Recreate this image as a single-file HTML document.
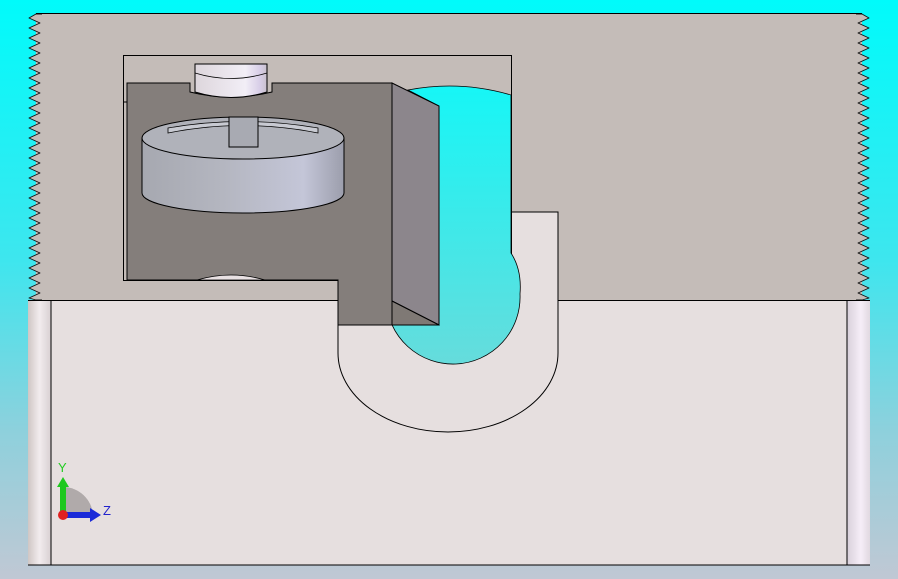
<!DOCTYPE html>
<html><head><style>
html,body{margin:0;padding:0;width:898px;height:579px;overflow:hidden}
body{background:linear-gradient(#00fbfb 0%,#3ee6ee 45%,#8fd0dc 75%,#c0c8d4 100%)}
</style></head><body>
<svg width="898" height="579" viewBox="0 0 898 579" xmlns="http://www.w3.org/2000/svg" style="position:absolute;left:0;top:0">
<defs>
<linearGradient id="rod" x1="0" x2="1" y1="0" y2="0"><stop offset="0" stop-color="#cfc6c4"/><stop offset="0.5" stop-color="#f2ecee"/><stop offset="1" stop-color="#d8d0d2"/></linearGradient>
<linearGradient id="rodR" x1="0" x2="1" y1="0" y2="0"><stop offset="0" stop-color="#d8d0da"/><stop offset="0.6" stop-color="#f6eef8"/><stop offset="1" stop-color="#e0d8e0"/></linearGradient>
<linearGradient id="cyan" x1="0" x2="0" y1="0" y2="1"><stop offset="0" stop-color="#16f6f6"/><stop offset="1" stop-color="#66dcdc"/></linearGradient>
<linearGradient id="boss" x1="0" x2="1" y1="0" y2="0"><stop offset="0" stop-color="#ddd6dc"/><stop offset="0.7" stop-color="#f2eef6"/><stop offset="0.9" stop-color="#d8cee8"/><stop offset="1" stop-color="#c8c0cc"/></linearGradient>
<linearGradient id="cyl" x1="0" x2="1" y1="0" y2="0"><stop offset="0" stop-color="#a6a8b0"/><stop offset="0.4" stop-color="#b4b6c0"/><stop offset="0.8" stop-color="#c4c6d8"/><stop offset="1" stop-color="#9c9eac"/></linearGradient>
</defs>
<rect x="28" y="300" width="842" height="265" fill="#e6dfdf"/>
<rect x="28" y="300" width="23" height="265" fill="url(#rod)"/>
<rect x="847" y="300" width="23" height="265" fill="url(#rodR)"/>
<line x1="51" y1="300" x2="51" y2="565" stroke="#000" stroke-width="1"/>
<line x1="847" y1="300" x2="847" y2="565" stroke="#000" stroke-width="1"/>
<line x1="28" y1="565" x2="870" y2="565" stroke="#000" stroke-width="1"/>
<rect x="36" y="13" width="826" height="287" fill="#c4bcb8"/>
<g fill="#c4bcb8" stroke="#111" stroke-width="0.9" stroke-linejoin="round">
<path d="M44 14 L36 14 L29 18 L40 23 L29 28 L40 33 L29 38 L40 43 L29 48 L40 53 L29 58 L40 63 L29 68 L40 73 L29 78 L40 83 L29 88 L40 93 L29 98 L40 103 L29 108 L40 113 L29 118 L40 123 L29 128 L40 133 L29 138 L40 143 L29 148 L40 153 L29 158 L40 163 L29 168 L40 173 L29 178 L40 183 L29 188 L40 193 L29 198 L40 203 L29 208 L40 213 L29 218 L40 223 L29 228 L40 233 L29 238 L40 243 L29 248 L40 253 L29 258 L40 263 L29 268 L40 273 L29 278 L40 283 L29 288 L40 293 L29 298 L36 300 L44 300 Z"/>
<path d="M854 14 L862 14 L869 18 L858 23 L869 28 L858 33 L869 38 L858 43 L869 48 L858 53 L869 58 L858 63 L869 68 L858 73 L869 78 L858 83 L869 88 L858 93 L869 98 L858 103 L869 108 L858 113 L869 118 L858 123 L869 128 L858 133 L869 138 L858 143 L869 148 L858 153 L869 158 L858 163 L869 168 L858 173 L869 178 L858 183 L869 188 L858 193 L869 198 L858 203 L869 208 L858 213 L869 218 L858 223 L869 228 L858 233 L869 238 L858 243 L869 248 L858 253 L869 258 L858 263 L869 268 L858 273 L869 278 L858 283 L869 288 L858 293 L869 298 L862 300 L854 300 Z"/>
</g>
<rect x="42" y="14" width="814" height="286" fill="#c4bcb8"/>
<line x1="36" y1="13.5" x2="862" y2="13.5" stroke="#000" stroke-width="1"/>
<line x1="28" y1="300.5" x2="338" y2="300.5" stroke="#000" stroke-width="1"/>
<line x1="558" y1="300.5" x2="870" y2="300.5" stroke="#000" stroke-width="1"/>
<path d="M511 212 L558 212 L558 353 A110 79 0 0 1 338 353 L338 300 L511 300 Z" fill="#e6dfdf"/>
<path d="M511 212 L558 212 L558 353 A110 79 0 0 1 338 353 L338 300" fill="none" stroke="#000" stroke-width="1"/>
<rect x="123.5" y="55.5" width="388" height="225" fill="#c4bcb8" stroke="#000" stroke-width="1"/>
<line x1="511.5" y1="212" x2="511.5" y2="300" stroke="#000"/>
<path d="M408 90 Q460 80 511 95 L511 253 Q522 270 520 294 A67 67 0 0 1 386 300 L439 300 L439 106 Z" fill="url(#cyan)" stroke="#000" stroke-width="0.8"/>
<path d="M127 83 L190 83 L190 92 Q230 102 272 92 L272 83 L392 83 L392 301 L392 325 L338 325 L338 280 L127 280 Z" fill="#847e7b" stroke="#000" stroke-width="1"/>
<path d="M392 83 L439 106 L439 325 L392 301 Z" fill="#8c868c" stroke="#000" stroke-width="1"/>
<path d="M392 301 L439 325 L392 325 Z" fill="#7f7975" stroke="#000" stroke-width="1"/>
<line x1="123" y1="102" x2="127" y2="102" stroke="#000"/>
<path d="M195 64 L267 64 L267 92 Q231 103 195 92 Z" fill="url(#boss)" stroke="#000" stroke-width="1"/>
<path d="M195 73 Q231 84 267 73" fill="none" stroke="#000" stroke-width="0.8"/>
<path d="M197 280 Q231 270 265 280 Z" fill="#e8e0e2" stroke="#000" stroke-width="0.8"/>
<path d="M142 138 L142 193 A101 20 0 0 0 344 193 L344 138 Z" fill="url(#cyl)" stroke="#000" stroke-width="1"/>
<ellipse cx="243" cy="138" rx="101" ry="21" fill="#b0b2ba" stroke="#000" stroke-width="1"/>
<path d="M168 133 Q243 118 318 133 L318 128 Q243 115 168 128 Z" fill="#c8cad2" stroke="#000" stroke-width="0.8"/>
<rect x="229" y="117" width="29" height="30" fill="#a8aab2" stroke="#000" stroke-width="1"/>
<path d="M63 487 A30 30 0 0 1 93 515 L63 515 Z" fill="#b0aaaa"/>
<rect x="60" y="486" width="6" height="29" fill="#1ec81e"/>
<path d="M57 487 L63 477 L69 487 Z" fill="#1ec81e"/>
<rect x="63" y="512" width="28" height="6" fill="#1a2ad8"/>
<path d="M90 508 L101 515 L90 522 Z" fill="#1a2ad8"/>
<circle cx="63" cy="515" r="5" fill="#e02020"/>
<text x="58" y="472" font-family="Liberation Sans, sans-serif" font-size="13" fill="#22cc22">Y</text>
<text x="103" y="515" font-family="Liberation Sans, sans-serif" font-size="13" fill="#2222cc">Z</text>
</svg>
</body></html>
